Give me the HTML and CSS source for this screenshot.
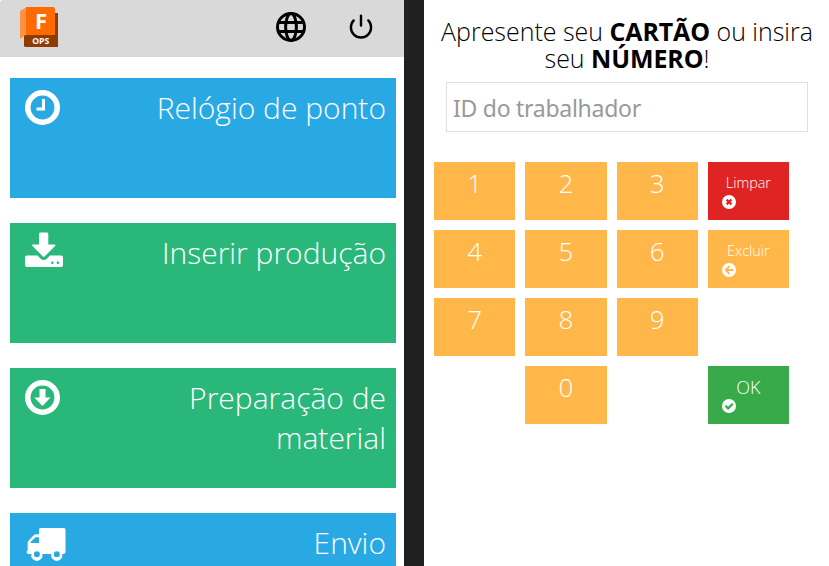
FILE: index.html
```html
<!DOCTYPE html>
<html lang="pt-BR">
<head>
<meta charset="utf-8">
<title>Operações</title>
<link rel="stylesheet" href="styles.css">
</head>
<body>
<div class="app">
  <section class="menu">
    <header class="topbar">
      <svg class="logo" viewBox="0 0 38 40" role="img" aria-label="F OPS">
        <path fill="#8f3b04" d="M5 6H38V40H6Q4 40 4 38V28H5z"/>
        <path fill="#ff9145" d="M0 4L7 0V27L0 32z"/>
        <path fill="#ff6b00" d="M6 0H33Q35 0 35 2V28H6z"/>
        <path fill="#8f3b04" d="M4 29L6 28H35V40H6Q4 40 4 38z"/>
        <text class="logo-letter" x="21" y="22">F</text>
        <text class="logo-label" x="20.7" y="37">OPS</text>
      </svg>
      <svg class="globe" viewBox="0 0 30 30">
        <g fill="none" stroke="#000" stroke-width="3"><circle cx="15" cy="15" r="13.5"/><ellipse cx="15" cy="15" rx="5.4" ry="13.5"/><path d="M2 10.5H28M2 19.5H28"/></g>
      </svg>
      <svg class="power" viewBox="0 0 24 25">
        <g fill="none" stroke="#000" stroke-width="2.4" stroke-linecap="round"><path d="M12 1.8V11.5"/><path d="M4.7 6.4A10.1 10.1 0 1 0 19.3 6.4"/></g>
      </svg>
    </header>
    <nav class="tiles">
      <a class="tile blue">
        <svg class="tile-icon" viewBox="0 0 42 38"><circle cx="17.5" cy="17.5" r="14.7" fill="none" stroke="#fff" stroke-width="5.6"/><path d="M18.5 9V19H11.5" fill="none" stroke="#fff" stroke-width="3"/></svg>
        <span>Relógio de ponto</span>
      </a>
      <a class="tile green">
        <svg class="tile-icon raised" viewBox="0 0 42 38"><path fill="#fff" d="M15 -.5H22Q23.3-.5 23.3 1V11.5H29.5Q31.2 11.5 30 13L19.8 23.3Q18.7 24.3 17.6 23.3L7.5 13Q6.3 11.5 8 11.5H14V1Q14-.5 15-.5z"/><path fill="#fff" fill-rule="evenodd" d="M2 22.5H12.5L16 26Q18.7 28.2 21.5 26L25 22.5H36Q38 22.5 38 24.5V32Q38 34 36 34H2Q0 34 0 32V24.5Q0 22.5 2 22.5zM26 29.8a1.3 1.3 0 1 0 2.6 0a1.3 1.3 0 1 0-2.6 0M31.6 29.8a1.3 1.3 0 1 0 2.6 0a1.3 1.3 0 1 0-2.6 0"/></svg>
        <span>Inserir produção</span>
      </a>
      <a class="tile green">
        <svg class="tile-icon" viewBox="0 0 42 38"><circle cx="17.5" cy="17.5" r="14.7" fill="none" stroke="#fff" stroke-width="5.6"/><path fill="#fff" d="M14.5 9H20.5V17.5H25.5L17.5 26L9.3 17.5H14.5z"/></svg>
        <span>Preparação de material</span>
      </a>
      <a class="tile blue">
        <svg class="tile-icon lowered" viewBox="0 0 42 38"><path fill="#fff" fill-rule="evenodd" d="M15.5 0H39Q40.5 0 40.5 2V24Q40.5 26 38 26H37.2A5.6 5.6 0 1 1 26.3 26H17.3A5.6 5.6 0 1 1 6.4 26H4Q1.5 26 1.5 24L2.7 22V14.5Q2.7 13.5 3.7 12.5L8.7 7.3Q9.7 6.2 11.2 6.2H14V1.5Q14 0 15.5 0zM5.7 15H14V9.2H11Q10.4 9.2 9.9 9.7L5.7 14zM8.9 26.2a3 3 0 1 0 6 0a3 3 0 1 0-6 0M28.8 26.2a3 3 0 1 0 6 0a3 3 0 1 0-6 0"/></svg>
        <span>Envio</span>
      </a>
    </nav>
  </section>
  <section class="login">
    <h1>Apresente seu <b>CARTÃO</b> ou insira seu <b>NÚMERO</b>!</h1>
    <input class="worker" type="text" placeholder="ID do trabalhador">
    <div class="keypad">
      <button class="key">1</button><button class="key">2</button><button class="key">3</button>
      <button class="key action clear">Limpar<svg viewBox="0 0 14 14"><circle cx="7" cy="7" r="7" fill="#fff"/><path d="M4.6 4.6L9.4 9.4M9.4 4.6L4.6 9.4" stroke="#e02424" stroke-width="2.2"/></svg></button>
      <button class="key">4</button><button class="key">5</button><button class="key">6</button>
      <button class="key action">Excluir<svg viewBox="0 0 14 14"><circle cx="7" cy="7" r="7" fill="#fff"/><path d="M7.5 3.2L3.7 7L7.5 10.8M4 7H11.3" fill="none" stroke="#ffb74a" stroke-width="1.8"/></svg></button>
      <button class="key">7</button><button class="key">8</button><button class="key">9</button>
      <button class="key zero">0</button>
      <button class="key action ok">OK<svg viewBox="0 0 14 14"><circle cx="7" cy="7" r="7" fill="#fff"/><path d="M3.5 6.8L6.1 9.4L10.8 4.7" fill="none" stroke="#39aa49" stroke-width="2.2"/></svg></button>
    </div>
  </section>
</div>
</body>
</html>
```

FILE: styles.css
```css
* { box-sizing: border-box; }
body { margin: 0; background: #fff; font-family: "Open Sans", sans-serif; font-weight: 300; }
.app { display: grid; grid-template-columns: 404px 1fr; height: 566px; overflow: hidden; }
.menu { overflow: hidden; }
.topbar { display: flex; height: 57px; padding: 7px 30px 0 20px; background: #d9d9d9; border-top-left-radius: 3px; }
.logo { width: 38px; height: 40px; overflow: visible; }
.logo text { fill: #fff; font-weight: 700; text-anchor: middle; }
.logo-letter { font-size: 22px; }
.logo-label { font-size: 8.6px; }
.globe { width: 30px; height: 30px; margin: 5px 0 0 auto; }
.power { width: 24px; height: 25px; margin: 7px 1px 0 43px; }
.tiles { display: flex; flex-direction: column; gap: 25px; padding: 21px 8px 0 10px; }
.tile { display: flex; flex: none; justify-content: space-between; height: 120px; padding: 10px 10px 0 15px; color: #fff; font-size: 30px; line-height: 40px; text-align: right; }
.tile-icon { flex: none; width: 42px; height: 38px; margin-top: 2px; overflow: visible; }
.raised { margin-top: 0; }
.lowered { margin-top: 5px; }
.tile span { width: 250px; }
.blue { background: #29a9e4; }
.green { background: #2ab77a; }
.login { border-left: 20px solid #202020; padding-top: 18px; }
h1 { margin: 0; padding: 0 8px 0 9px; color: #000; font-size: 24.96px; font-weight: 300; line-height: 27px; text-align: center; }
h1 b { font-weight: 700; letter-spacing: -0.1px; }
.worker { display: block; width: 362px; height: 50px; margin: 10px 0 30px 22px; padding: 2px 6px 0; border: 1px solid #e0e0e0; font: 400 23px "Noto Sans", sans-serif; letter-spacing: -0.27px; }
.worker::placeholder { color: #999; opacity: 1; }
.keypad { display: grid; grid-template-columns: repeat(4, 81.25px); grid-auto-rows: 58px; gap: 10px; margin-left: 10px; }
.key { display: flex; flex-direction: column; align-items: center; justify-content: flex-start; border: 0; padding: 4px 0 0; background: #ffb74a; color: #fff; font: 300 26px/34px "Open Sans", sans-serif; }
.key svg { align-self: flex-start; width: 14px; height: 14px; margin-left: 14px; }
.action { padding-top: 9px; font-size: 14.4px; line-height: 24px; }
.clear { background: #e02424; }
.zero { grid-column: 2; }
.ok { grid-column: 4; background: #39aa49; font-size: 18px; }
```
